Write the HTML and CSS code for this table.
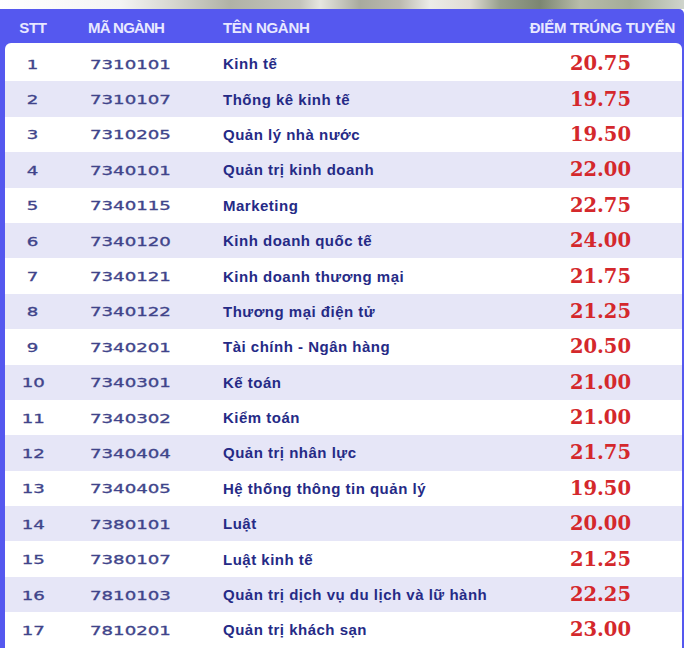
FILE: index.html
```html
<!DOCTYPE html>
<html lang="vi">
<head>
<meta charset="utf-8">
<title>Điểm trúng tuyển</title>
<link rel="stylesheet" href="styles.css">
</head>
<body>
<div class="strip"></div>
<div class="panel">
  <div class="head">
    <div class="h-stt">STT</div>
    <div class="h-code">MÃ NGÀNH</div>
    <div class="h-name">TÊN NGÀNH</div>
    <div class="h-score">ĐIỂM TRÚNG TUYỂN</div>
  </div>
  <div class="body">
    <div class="row"><div class="stt"><span class="wide">1</span></div><div class="code"><span class="wide">7310101</span></div><div class="name">Kinh tế</div><div class="score">20.75</div></div>
    <div class="row alt"><div class="stt"><span class="wide">2</span></div><div class="code"><span class="wide">7310107</span></div><div class="name">Thống kê kinh tế</div><div class="score">19.75</div></div>
    <div class="row"><div class="stt"><span class="wide">3</span></div><div class="code"><span class="wide">7310205</span></div><div class="name">Quản lý nhà nước</div><div class="score">19.50</div></div>
    <div class="row alt"><div class="stt"><span class="wide">4</span></div><div class="code"><span class="wide">7340101</span></div><div class="name">Quản trị kinh doanh</div><div class="score">22.00</div></div>
    <div class="row"><div class="stt"><span class="wide">5</span></div><div class="code"><span class="wide">7340115</span></div><div class="name">Marketing</div><div class="score">22.75</div></div>
    <div class="row alt"><div class="stt"><span class="wide">6</span></div><div class="code"><span class="wide">7340120</span></div><div class="name">Kinh doanh quốc tế</div><div class="score">24.00</div></div>
    <div class="row"><div class="stt"><span class="wide">7</span></div><div class="code"><span class="wide">7340121</span></div><div class="name">Kinh doanh thương mại</div><div class="score">21.75</div></div>
    <div class="row alt"><div class="stt"><span class="wide">8</span></div><div class="code"><span class="wide">7340122</span></div><div class="name">Thương mại điện tử</div><div class="score">21.25</div></div>
    <div class="row"><div class="stt"><span class="wide">9</span></div><div class="code"><span class="wide">7340201</span></div><div class="name">Tài chính - Ngân hàng</div><div class="score">20.50</div></div>
    <div class="row alt"><div class="stt"><span class="wide">10</span></div><div class="code"><span class="wide">7340301</span></div><div class="name">Kế toán</div><div class="score">21.00</div></div>
    <div class="row"><div class="stt"><span class="wide">11</span></div><div class="code"><span class="wide">7340302</span></div><div class="name">Kiểm toán</div><div class="score">21.00</div></div>
    <div class="row alt"><div class="stt"><span class="wide">12</span></div><div class="code"><span class="wide">7340404</span></div><div class="name">Quản trị nhân lực</div><div class="score">21.75</div></div>
    <div class="row"><div class="stt"><span class="wide">13</span></div><div class="code"><span class="wide">7340405</span></div><div class="name">Hệ thống thông tin quản lý</div><div class="score">19.50</div></div>
    <div class="row alt"><div class="stt"><span class="wide">14</span></div><div class="code"><span class="wide">7380101</span></div><div class="name">Luật</div><div class="score">20.00</div></div>
    <div class="row"><div class="stt"><span class="wide">15</span></div><div class="code"><span class="wide">7380107</span></div><div class="name">Luật kinh tế</div><div class="score">21.25</div></div>
    <div class="row alt"><div class="stt"><span class="wide">16</span></div><div class="code"><span class="wide">7810103</span></div><div class="name">Quản trị dịch vụ du lịch và lữ hành</div><div class="score">22.25</div></div>
    <div class="row"><div class="stt"><span class="wide">17</span></div><div class="code"><span class="wide">7810201</span></div><div class="name">Quản trị khách sạn</div><div class="score">23.00</div></div>
  </div>
</div>
</body>
</html>
```
FILE: styles.css
```css
html, body {
  margin: 0;
  padding: 0;
  background: #ffffff;
  height: 650px;
  overflow: hidden;
}
body {
  font-family: "Liberation Sans", Arial, sans-serif;
}
.strip {
  height: 9px;
  width: 684px;
  background: linear-gradient(90deg, #ffffff 0, #f4f4f4 120px, #d8d8d2 170px, #b0b2a6 230px, #c4c4bc 300px, #e6e6e0 320px, #a8aa9e 360px, #bcbab0 400px, #ecece8 430px, #e0dcd4 470px, #98a08e 500px, #7c8672 540px, #b8bcaa 580px, #a4ac98 630px, #cfd4cc 684px);
}
.panel {
  width: 684px;
  background: #5558ef;
  border-top-right-radius: 5px;
  padding: 0 2px 0 5px;
  box-sizing: border-box;
}
.head {
  height: 34px;
  padding-top: 2px;
  box-sizing: border-box;
  display: grid;
  grid-template-columns: 56px 162px 1fr auto;
  align-items: center;
  color: #e8e8ff;
  font-weight: bold;
  font-size: 15px;
  letter-spacing: -0.3px;
  padding-right: 7px;
}
.h-stt { text-align: center; }
.h-code { padding-left: 27px; letter-spacing: -0.8px; }
.h-name { padding-left: 0; }
.h-score { text-align: right; }
.body {
  background: #ffffff;
  border-radius: 6px 6px 0 0;
  padding-top: 3px;
}
.row {
  height: 35.4px;
  display: grid;
  grid-template-columns: 56px 162px 1fr auto;
  align-items: center;
  padding-right: 51px;
}
.row.alt {
  background: #e6e6f7;
}
.stt {
  text-align: center;
  color: #40448a;
}
.code {
  padding-left: 29px;
  color: #40448a;
}
.wide {
  display: inline-block;
  font-family: "DejaVu Sans", sans-serif;
  font-size: 11.5px;
  font-weight: normal;
  -webkit-text-stroke: 0.3px #40448a;
  transform: scaleX(1.58);
}
.stt .wide {
  transform-origin: center;
}
.code .wide {
  transform-origin: left center;
}
.name {
  color: #252a86;
  font-weight: bold;
  font-size: 15px;
  letter-spacing: 0.5px;
}
.score {
  font-family: "DejaVu Serif", serif;
  font-weight: bold;
  font-size: 19.5px;
  color: #d4282c;
  text-align: right;
}
```
